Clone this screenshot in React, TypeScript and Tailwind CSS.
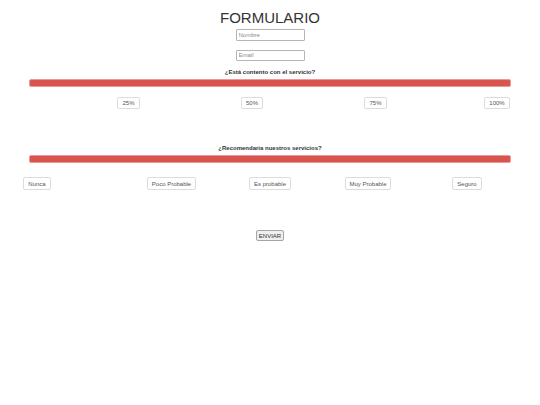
import React from "react";

const row1 = [
  { label: "25%", ml: 117, w: 23 },
  { label: "50%", ml: 101, w: 22 },
  { label: "75%", ml: 101, w: 23 },
  { label: "100%", ml: 97, w: 26 },
];

const row2 = [
  { label: "Nunca", ml: 23, w: 28 },
  { label: "Poco Probable", ml: 96, w: 49 },
  { label: "Es probable", ml: 53, w: 42 },
  { label: "Muy Probable", ml: 54, w: 46 },
  { label: "Seguro", ml: 61, w: 30 },
];

function Opt({ label, ml, w, h }: { label: string; ml: number; w: number; h: number }) {
  return (
    <button
      type="button"
      style={{ marginLeft: ml, width: w, height: h }}
      className="flex shrink-0 items-center justify-center whitespace-nowrap rounded-[2px] border border-[#dcdcdc] bg-white p-0 text-[6px] leading-none text-[#555]"
    >
      {label}
    </button>
  );
}

export default function App() {
  return (
    <div
      className="min-h-[405px] w-[540px] bg-white text-[#333]"
      style={{ fontFamily: '"Liberation Sans", Arial, sans-serif' }}
    >
      <div className="flex flex-col items-center">
        <h1 className="pt-[10px] text-[15px] font-normal leading-[15px] text-[#333]">FORMULARIO</h1>
        <input
          placeholder="Nombre"
          className="mt-[4px] h-[12px] w-[69px] rounded-[1px] border border-[#b5b5b5] px-[2px] text-[6px] leading-none text-[#333] outline-none placeholder:text-[#8a8a8a]"
        />
        <input
          placeholder="Email"
          className="mt-[8.5px] h-[11px] w-[69px] rounded-[1px] border border-[#b5b5b5] px-[2px] text-[6px] leading-none text-[#333] outline-none placeholder:text-[#8a8a8a]"
        />
      </div>

      <div className="mt-[7.5px] text-center text-[6px] font-bold leading-[8px] text-[#333]">
        ¿Está contento con el servicio?
      </div>
      <div className="mt-[3px] px-[29px]">
        <div className="h-[8px] rounded-[2px] border border-[#e79a97] bg-[#d9534f]" />
      </div>
      <div className="mt-[10px] flex">
        {row1.map((o) => (
          <Opt key={o.label} {...o} h={12} />
        ))}
      </div>

      <div className="mt-[35px] text-center text-[6px] font-bold leading-[8px] text-[#333]">
        ¿Recomendaria nuestros servicios?
      </div>
      <div className="mt-[3px] px-[29px]">
        <div className="h-[8px] rounded-[2px] border border-[#e79a97] bg-[#d9534f]" />
      </div>
      <div className="mt-[14px] flex">
        {row2.map((o) => (
          <Opt key={o.label} {...o} h={13} />
        ))}
      </div>

      <div className="mt-[40px] flex justify-center">
        <button
          type="button"
          className="flex h-[11px] w-[28px] items-center justify-center rounded-[2px] border border-[#a5a5a5] bg-[#efefef] p-0 text-[6px] leading-none text-[#333]"
        >
          ENVIAR
        </button>
      </div>
    </div>
  );
}
